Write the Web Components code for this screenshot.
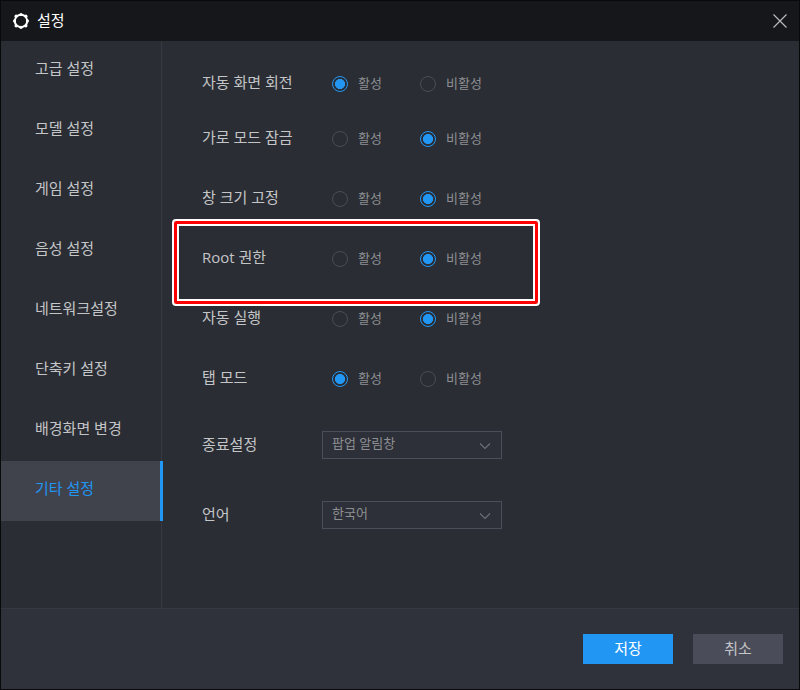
<!DOCTYPE html>
<html lang="ko">
<head>
<meta charset="utf-8">
<title>설정</title>
<style>
html, body { height: 100%; margin: 0; }
body { background: #08090b; font-family: "Open Sans", "Noto Sans CJK KR", sans-serif; font-size: 15px; line-height: 20px; color: #c4c5c7; }
</style>
</head>
<body>
<settings-window>
  <title-bar slot="title">설정</title-bar>
  <side-nav slot="nav">
    <nav-item>고급 설정</nav-item>
    <nav-item>모델 설정</nav-item>
    <nav-item>게임 설정</nav-item>
    <nav-item>음성 설정</nav-item>
    <nav-item>네트워크설정</nav-item>
    <nav-item>단축키 설정</nav-item>
    <nav-item>배경화면 변경</nav-item>
    <nav-item active>기타 설정</nav-item>
  </side-nav>
  <settings-panel>
    <toggle-row label="자동 화면 회전" value="on"></toggle-row>
    <toggle-row label="가로 모드 잠금" value="off" tight></toggle-row>
    <toggle-row label="창 크기 고정" value="off"></toggle-row>
    <toggle-row label="Root 권한" value="off" highlight></toggle-row>
    <toggle-row label="자동 실행" value="off"></toggle-row>
    <toggle-row label="탭 모드" value="on"></toggle-row>
    <select-row label="종료설정" value="팝업 알림창"></select-row>
    <select-row label="언어" value="한국어"></select-row>
  </settings-panel>
  <action-button slot="actions" primary>저장</action-button>
  <action-button slot="actions">취소</action-button>
</settings-window>
<script>
const define = (name, render) => customElements.define(name, class extends HTMLElement {
  connectedCallback() {
    if (!this.shadowRoot) this.attachShadow({ mode: "open" }).innerHTML = render(this);
  }
});

define("settings-window", () => `
  <style>
    :host { display: flex; flex-direction: column; box-sizing: border-box; min-height: 100vh; border: 1px solid #08090b; background: #2a2d34; }
    .body { display: flex; flex: 1; }
    main { flex: 1; min-width: 0; }
    footer { display: flex; justify-content: flex-end; gap: 20px; padding: 25px 16px; border-top: 1px solid #363942; background: #2f323a; }
  </style>
  <slot name="title"></slot>
  <div class="body"><slot name="nav"></slot><main><slot></slot></main></div>
  <footer><slot name="actions"></slot></footer>`);

define("title-bar", () => `
  <style>
    :host { display: block; background: #16171b; color: #fff; }
    header { display: flex; align-items: center; height: 40px; padding: 0 12px; gap: 8px; }
    h1 { flex: 1; margin: 0; padding-bottom: 2px; font: inherit; }
    svg { display: block; }
    button { padding: 0; border: 0; background: none; color: #b9babc; }
  </style>
  <header>
    <svg width="16" height="16" viewBox="0 0 16 16" aria-hidden="true">
      <circle cx="8" cy="8" r="6.1" fill="none" stroke="#fff" stroke-width="2.2"/>
      <g fill="#fff"><circle cx="8" cy="1.7" r="1.7"/><circle cx="12.8" cy="3.2" r="1.7"/><circle cx="14.3" cy="8" r="1.7"/><circle cx="12.8" cy="12.8" r="1.7"/><circle cx="8" cy="14.3" r="1.7"/><circle cx="3.2" cy="12.8" r="1.7"/><circle cx="1.7" cy="8" r="1.7"/><circle cx="3.2" cy="3.2" r="1.7"/></g>
      <circle cx="8" cy="8" r="5" fill="#16171b"/>
    </svg>
    <h1><slot></slot></h1>
    <button type="button" aria-label="닫기"><svg width="14" height="14" viewBox="0 0 14 14"><path d="M.5.5l13 13M13.5.5l-13 13" fill="none" stroke="currentColor" stroke-width="1.2"/></svg></button>
  </header>`);

define("side-nav", () => `
  <style>
    :host { display: block; flex: none; width: 160px; border-right: 1px solid #363942; }
    nav { display: flex; flex-direction: column; }
  </style>
  <nav><slot></slot></nav>`);

define("nav-item", () => `
  <style>
    :host { display: block; }
    button { display: block; width: 100%; height: 60px; padding: 0 0 6px 34px; border: 0; background: none; color: inherit; font: inherit; text-align: left; }
    :host([active]) { position: relative; margin-right: -2px; border-right: 3px solid #2196f3; background: #40434c; color: #2196f3; }
  </style>
  <button type="button"><slot></slot></button>`);

define("settings-panel", () => `
  <style>:host { display: block; padding: 28px 40px; }</style><slot></slot>`);

define("toggle-row", el => {
  const option = (id, text) => `<label for="${id}"><input type="radio" name="state" id="${id}"${el.getAttribute("value") === id ? " checked" : ""}><span>${text}</span></label>`;
  return `
  <style>
    :host { display: block; position: relative; margin-bottom: 30px; }
    :host([tight]) { margin-top: -5px; }
    :host([highlight])::after { content: ""; position: absolute; z-index: 1; left: -30px; top: -25px; box-sizing: border-box; width: 368px; height: 87px; border: 2px solid #fff; border-radius: 4px; box-shadow: inset 0 0 0 3px #f00, inset 0 0 0 5px #fff; pointer-events: none; }
    fieldset { display: flex; align-items: center; height: 30px; margin: 0; padding: 0; border: 0; }
    .name { width: 130px; padding-bottom: 4px; }
    label { display: flex; align-items: center; gap: 10px; width: 88px; font-size: 13px; color: #8d8f92; }
    label span { padding-bottom: 2px; }
    input { appearance: none; box-sizing: border-box; width: 16px; height: 16px; margin: 0; border: 1px solid #4a4d58; border-radius: 50%; }
    input:checked { border-color: #2196f3; background: radial-gradient(circle, #2196f3 5px, transparent 6px); background: radial-gradient(circle closest-side, #2196f3 68%, transparent 76%); }
  </style>
  <fieldset aria-labelledby="name"><span class="name" id="name">${el.getAttribute("label")}</span>${option("on", "활성")}${option("off", "비활성")}</fieldset>`;
});

define("select-row", el => `
  <style>
    :host { display: flex; align-items: center; height: 30px; margin: 36px 0 40px; }
    label { width: 120px; padding-bottom: 2px; }
    .box { display: grid; align-items: center; width: 180px; }
    .box > * { grid-area: 1 / 1; }
    select { appearance: none; box-sizing: border-box; width: 100%; height: 28px; margin: 0; padding: 0 28px 4px 9px; border: 1px solid #4a4d5a; border-radius: 0; background: #2d3038; color: #8d8f92; font: inherit; font-size: 13px; }
    svg { justify-self: end; margin: 2px 11px 0 0; pointer-events: none; }
  </style>
  <label for="choice">${el.getAttribute("label")}</label>
  <div class="box"><select id="choice"><option>${el.getAttribute("value")}</option></select>
  <svg width="12" height="8" viewBox="0 0 12 8" aria-hidden="true"><path d="M1 1.5l5 5 5-5" fill="none" stroke="#6d7078" stroke-width="1.1"/></svg></div>`);

define("action-button", () => `
  <style>
    button { display: block; width: 90px; height: 30px; padding: 0 0 2px; border: 0; background: #4a4d59; color: #c4c5c7; font: inherit; }
    :host { display: block; }
    :host([primary]) button { background: #2196f3; color: #fff; }
  </style>
  <button type="button"><slot></slot></button>`);
</script>
</body>
</html>
